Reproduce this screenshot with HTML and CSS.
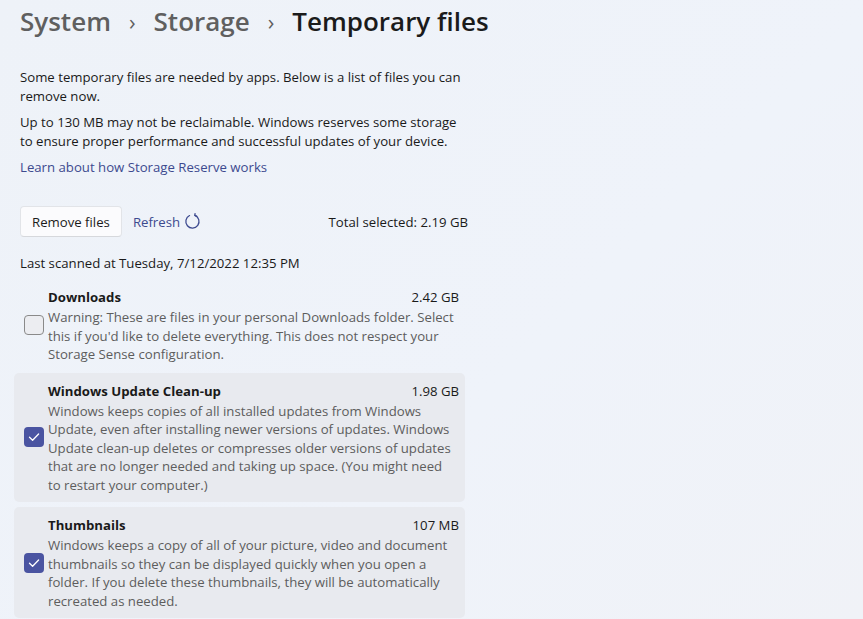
FILE: index.html
```html
<!DOCTYPE html>
<html lang="en">
<head>
<meta charset="utf-8">
<title>Temporary files</title>
<link rel="stylesheet" href="styles.css">
</head>
<body>
<div class="page">
  <h1 class="crumbs">
    <span class="crumb">System</span>
    <span class="chev">›</span>
    <span class="crumb">Storage</span>
    <span class="chev">›</span>
    <span class="current">Temporary files</span>
  </h1>
  <p class="intro first">Some temporary files are needed by apps. Below is a list of files you can remove now.</p>
  <p class="intro">Up to 130 MB may not be reclaimable. Windows reserves some storage to ensure proper performance and successful updates of your device.</p>
  <a class="link" href="#">Learn about how Storage Reserve works</a>
  <div class="actions">
    <button class="btn">Remove files</button>
    <span class="refresh">Refresh
      <svg class="ricon" viewBox="0 0 16 16" width="17" height="17"><path d="M10.2 2.2 A6.2 6.2 0 1 1 5.2 2.4" fill="none" stroke="currentColor" stroke-width="1.2" stroke-linecap="round"/><path d="M10.4 0.6 L10.2 2.2 L11.9 2.9" fill="none" stroke="currentColor" stroke-width="1.2" stroke-linecap="round" stroke-linejoin="round"/></svg>
    </span>
    <span class="total">Total selected: 2.19 GB</span>
  </div>
  <div class="scanned">Last scanned at Tuesday, 7/12/2022 12:35 PM</div>
  <div class="list">
    <div class="item">
      <span class="box"></span>
      <div class="body">
        <div class="head"><span class="name">Downloads</span><span class="size">2.42 GB</span></div>
        <div class="desc">Warning: These are files in your personal Downloads folder. Select this if you'd like to delete everything. This does not respect your Storage Sense configuration.</div>
      </div>
    </div>
    <div class="item sel">
      <span class="box on"><svg viewBox="0 0 20 20" width="20" height="20"><path d="M5.5 10.3 L8.6 13.3 L14.6 7" fill="none" stroke="#fff" stroke-width="1.3" stroke-linecap="round" stroke-linejoin="round"/></svg></span>
      <div class="body">
        <div class="head"><span class="name">Windows Update Clean-up</span><span class="size">1.98 GB</span></div>
        <div class="desc">Windows keeps copies of all installed updates from Windows Update, even after installing newer versions of updates. Windows Update clean-up deletes or compresses older versions of updates that are no longer needed and taking up space. (You might need to restart your computer.)</div>
      </div>
    </div>
    <div class="item sel">
      <span class="box on"><svg viewBox="0 0 20 20" width="20" height="20"><path d="M5.5 10.3 L8.6 13.3 L14.6 7" fill="none" stroke="#fff" stroke-width="1.3" stroke-linecap="round" stroke-linejoin="round"/></svg></span>
      <div class="body">
        <div class="head"><span class="name">Thumbnails</span><span class="size">107 MB</span></div>
        <div class="desc">Windows keeps a copy of all of your picture, video and document thumbnails so they can be displayed quickly when you open a folder. If you delete these thumbnails, they will be automatically recreated as needed.</div>
      </div>
    </div>
  </div>
</div>
</body>
</html>
```
FILE: styles.css
```css
html, body {
  margin: 0;
  padding: 0;
  height: 100%;
  overflow: hidden;
}
body {
  background: linear-gradient(135deg, #eef2f8 0%, #eff3fa 60%, #f0f2f7 100%);
  font-family: "Open Sans", "Noto Sans", sans-serif;
  font-size: 13.2px;
  color: #1a1a1a;
}
.page {
  padding: 0 20px;
  width: 448px;
}
.crumbs {
  margin: 3px 0 0;
  font-size: 26px;
  line-height: 36px;
  font-weight: 600;
  white-space: nowrap;
  display: flex;
  align-items: center;
}
.crumb { color: #5f5f5f; }
.chev {
  color: #5f5f5f;
  font-size: 22px;
  padding: 0 18px 0 18px;
  font-weight: 400;
}
.current { color: #1b1b1b; }
.intro {
  margin: 29px 0 0;
  line-height: 19px;
}
.intro + .intro { margin-top: 7px; }
.link {
  display: block;
  margin-top: 7px;
  color: #3d4a8f;
  text-decoration: none;
  line-height: 19px;
}
.actions {
  display: flex;
  align-items: center;
  margin-top: 29px;
}
.btn {
  font: inherit;
  color: #1b1b1b;
  background: #fbfbfd;
  border: 1px solid #e2e4e8;
  border-bottom-color: #d6d8dc;
  border-radius: 4px;
  height: 31px;
  padding: 0 11px;
}
.refresh {
  display: flex;
  align-items: center;
  margin-left: 11px;
  color: #3d4a8f;
}
.ricon { margin-left: 4px; }
.total { margin-left: auto; }
.scanned {
  margin-top: 17px;
  line-height: 19px;
}
.list {
  margin: 7px 3px 0 -6px;
  display: flex;
  flex-direction: column;
  gap: 5px;
}
.item {
  display: flex;
  align-items: center;
  padding: 7px 6px 4px 10px;
  border-radius: 5px;
}
.item.sel {
  background: #e8eaef;
  padding-top: 8px;
  padding-bottom: 8px;
}
.box {
  flex: none;
  width: 18px;
  height: 18px;
  border: 1px solid #8a8a8a;
  border-radius: 4px;
  background: #ecedf1;
  margin-right: 4px;
  display: flex;
  align-items: center;
  justify-content: center;
}
.box.on {
  width: 20px;
  height: 20px;
  border: none;
  background: #4a54a1;
}
.body { flex: 1; }
.head {
  display: flex;
  justify-content: space-between;
  line-height: 20px;
}
.name { font-weight: 700; }
.desc {
  color: #5d5d5d;
  line-height: 18.5px;
  margin-top: 1px;
  padding-right: 2px;
}
```
